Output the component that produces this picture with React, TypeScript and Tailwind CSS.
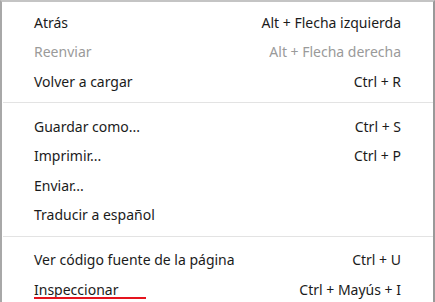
const font = { fontFamily: '"Noto Sans", "Open Sans", sans-serif' };

type Item = { label: string; shortcut?: string; disabled?: boolean; underline?: boolean };

const sections: Item[][] = [
  [
    { label: 'Atrás', shortcut: 'Alt + Flecha izquierda' },
    { label: 'Reenviar', shortcut: 'Alt + Flecha derecha', disabled: true },
    { label: 'Volver a cargar', shortcut: 'Ctrl + R' },
  ],
  [
    { label: 'Guardar como...', shortcut: 'Ctrl + S' },
    { label: 'Imprimir...', shortcut: 'Ctrl + P' },
    { label: 'Enviar...' },
    { label: 'Traducir a español' },
  ],
  [
    { label: 'Ver código fuente de la página', shortcut: 'Ctrl + U' },
    { label: 'Inspeccionar', shortcut: 'Ctrl + Mayús + I', underline: true },
  ],
];

function MenuRow({ item }: { item: Item }) {
  const color = item.disabled ? 'text-[#9a9a9a]' : 'text-[#1b1b1b]';
  return (
    <div className={`flex h-[29.5px] items-center justify-between pl-[32px] pr-[32px] text-[14px] ${color}`}>
      <span className="relative leading-[19px]">
        {item.label}
        {item.underline && (
          <span className="absolute left-0 top-[17px] h-[2px] w-[112px] bg-[#e5141e]" />
        )}
      </span>
      {item.shortcut && <span className="leading-[19px]">{item.shortcut}</span>}
    </div>
  );
}

export default function App() {
  return (
    <div className="h-[302px] w-[435px] overflow-hidden bg-white" style={font}>
      <div className="h-full w-[435px] border-l-2 border-t-2 border-r-2 border-l-[#a8a8a8] border-t-[#c4c4c4] border-r-[#999999] pt-[5.5px]">
        {sections.map((section, i) => (
          <div key={i}>
            {i > 0 && <div className="ml-[1px] mb-[8.5px] mt-[6px] h-px bg-[#e3e3e3]" />}
            {section.map((item) => (
              <MenuRow key={item.label} item={item} />
            ))}
          </div>
        ))}
      </div>
    </div>
  );
}
